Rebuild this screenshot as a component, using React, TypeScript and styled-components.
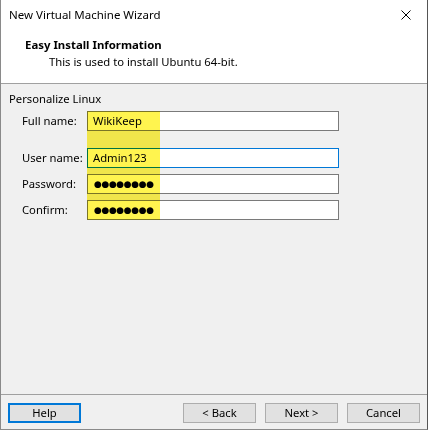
import styled, { createGlobalStyle } from "styled-components";

const GlobalStyle = createGlobalStyle`
  html, body {
    margin: 0;
    padding: 0;
    background: #ffffff;
  }
  * {
    box-sizing: border-box;
  }
`;

const Window = styled.div`
  width: 428px;
  height: 430px;
  display: flex;
  flex-direction: column;
  border: 1px solid #8a8a8a;
  border-top: none;
  border-right-color: #555555;
  font-family: "Noto Sans", "DejaVu Sans", sans-serif;
  font-size: 11.25px;
  color: #000;
  background: #f0f0f0;
`;

const TitleBar = styled.div`
  height: 31px;
  display: flex;
  align-items: center;
  justify-content: space-between;
  padding: 0 8px 0 8px;
  background: #ffffff;
`;

const TitleText = styled.span`
  font-size: 11.5px;
  line-height: 16px;
  margin-top: -1px;
`;

const CloseButton = styled.svg`
  width: 10px;
  height: 10px;
  margin-right: 8px;
  margin-top: -1px;
`;

const Header = styled.div`
  height: 53px;
  background: #ffffff;
  border-bottom: 1px solid #a0a0a0;
  padding: 6px 0 0 24px;
`;

const Heading = styled.div`
  font-weight: 700;
  font-size: 11.4px;
  line-height: 16px;
`;

const SubHeading = styled.div`
  line-height: 16px;
  margin-top: 1px;
  padding-left: 24px;
`;

const Body = styled.div`
  flex: 1;
  padding: 7px 0 0 8px;
`;

const GroupTitle = styled.div`
  line-height: 16px;
`;

const Form = styled.div`
  position: relative;
  margin-top: 4px;
  display: grid;
  grid-template-columns: 65px 252px;
  padding-left: 13px;
`;

const Label = styled.label<{ $gap?: number }>`
  display: flex;
  align-items: center;
  height: 20px;
  margin-top: ${(p) => p.$gap ?? 0}px;
  padding-bottom: 1px;
`;

const Input = styled.div<{ $focused?: boolean; $gap?: number }>`
  height: 20px;
  margin-top: ${(p) => p.$gap ?? 0}px;
  border: 1px solid ${(p) => (p.$focused ? "#0078d7" : "#7a7a7a")};
  background: #ffffff;
  display: flex;
  align-items: center;
  padding: 0 0 1px 5px;
  line-height: 16px;
`;

const Dots = styled.span`
  font-size: 9px;
  letter-spacing: -0.4px;
  padding-left: 1px;
`;

const Highlight = styled.div`
  position: absolute;
  left: 78px;
  top: 0;
  width: 73px;
  height: 109px;
  background: #fff44f;
  mix-blend-mode: multiply;
  pointer-events: none;
`;

const Footer = styled.div`
  border-top: 1px solid #a0a0a0;
  height: 35px;
  display: flex;
  align-items: flex-start;
  padding: 8px 7px 0 7px;
  gap: 9px;
`;

const Button = styled.button<{ $focused?: boolean }>`
  width: 73px;
  height: 20px;
  font: inherit;
  line-height: 14px;
  padding: 0 0 1px 0;
  background: #e1e1e1;
  color: #000;
  border: ${(p) => (p.$focused ? "2px solid #0078d7" : "1px solid #adadad")};
`;

const Spacer = styled.div`
  flex: 1;
`;

export default function App() {
  return (
    <>
      <GlobalStyle />
      <Window>
        <TitleBar>
          <TitleText>New Virtual Machine Wizard</TitleText>
          <CloseButton viewBox="0 0 10 10">
            <path d="M0.5 0.5 L9.5 9.5 M9.5 0.5 L0.5 9.5" stroke="#000" strokeWidth="1" fill="none" />
          </CloseButton>
        </TitleBar>
        <Header>
          <Heading>Easy Install Information</Heading>
          <SubHeading>This is used to install Ubuntu 64-bit.</SubHeading>
        </Header>
        <Body>
          <GroupTitle>Personalize Linux</GroupTitle>
          <Form>
            <Label>Full name:</Label>
            <Input>WikiKeep</Input>
            <Label $gap={17}>User name:</Label>
            <Input $gap={17} $focused>Admin123</Input>
            <Label $gap={6}>Password:</Label>
            <Input $gap={6}>
              <Dots>●●●●●●●●</Dots>
            </Input>
            <Label $gap={6}>Confirm:</Label>
            <Input $gap={6}>
              <Dots>●●●●●●●●</Dots>
            </Input>
            <Highlight />
          </Form>
        </Body>
        <Footer>
          <Button $focused>Help</Button>
          <Spacer />
          <Button>&lt; Back</Button>
          <Button>Next &gt;</Button>
          <Button>Cancel</Button>
        </Footer>
      </Window>
    </>
  );
}
